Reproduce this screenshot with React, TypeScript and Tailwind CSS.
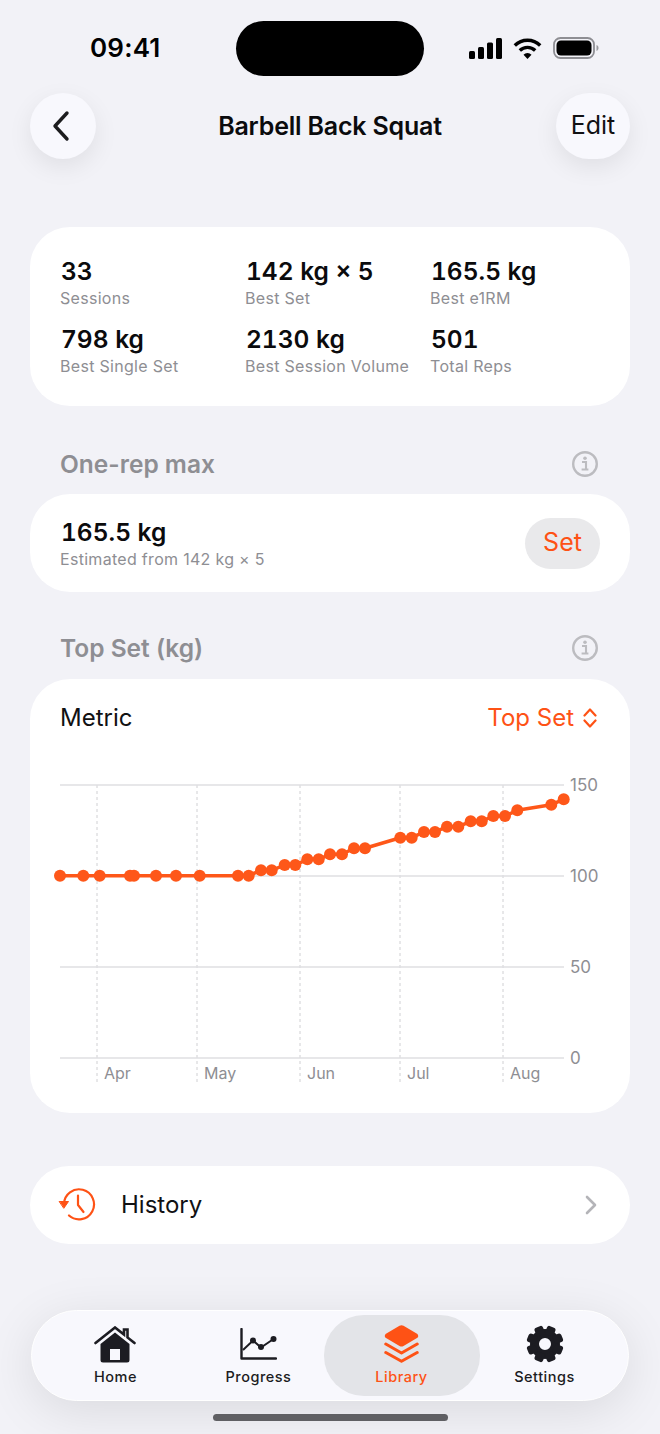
const font = { fontFamily: '"Inter", "Liberation Sans", sans-serif' };

const points: [number, number][] = [
  [60, 875.7], [83.3, 875.7], [99.7, 875.7], [130, 875.7], [134, 875.7], [156, 875.7], [176, 875.7], [199.7, 875.7],
  [238, 875.7], [248.7, 875.7], [261, 870.3], [271.7, 870.3], [284.7, 865], [295.3, 865], [307.3, 859.3], [318.7, 859.3],
  [330, 854.3], [342, 854.3], [354, 848.3], [365, 848.3], [400.3, 837.7], [411.7, 837.7], [424, 832], [435, 832],
  [447, 826.7], [458.3, 826.7], [470.7, 821.3], [481.7, 821.3], [493.3, 816], [505, 816], [517.3, 810.3], [551.3, 804.7], [563.7, 799.3],
];

const stats = [
  { value: "33", label: "Sessions" },
  { value: "142 kg × 5", label: "Best Set" },
  { value: "165.5 kg", label: "Best e1RM" },
  { value: "798 kg", label: "Best Single Set" },
  { value: "2130 kg", label: "Best Session Volume" },
  { value: "501", label: "Total Reps" },
];

function StatusBar() {
  return (
    <div className="h-[93px] relative flex items-start justify-between pl-[90px] pr-[61px] pt-[32px]">
      <span className="text-[26px] leading-[32px] font-semibold text-black tracking-[0.2px]">09:41</span>
      <div className="absolute left-[236px] top-[21px] w-[188px] h-[55px] rounded-full bg-black" />
      <div className="flex items-center gap-[11px] h-[32px]">
        <svg width="33" height="21" viewBox="0 0 33 21" fill="#000">
          <rect x="0" y="13" width="6" height="8" rx="1.5" />
          <rect x="9" y="9" width="6" height="12" rx="1.5" />
          <rect x="18" y="4.500" width="6" height="16.500" rx="1.500" />
          <rect x="27" y="0" width="6" height="21" rx="1.5" />
        </svg>
        <svg width="29" height="21" viewBox="0 0 29 21" fill="none" stroke="#000" strokeWidth="3.4">
          <path d="M1.800 7.500a18 18 0 0 1 25.400 0" />
          <path d="M6.800 12.500a11 11 0 0 1 15.400 0" />
          <path d="M14.500 21l-4-4.300a5.600 5.600 0 0 1 8 0z" fill="#000" stroke="none" />
        </svg>
        <svg width="46" height="22" viewBox="0 0 46 22" fill="none">
          <rect x="1" y="1" width="40" height="20" rx="6.500" stroke="#8e8e93" strokeWidth="1.8" />
          <rect x="3.500" y="3.500" width="35" height="15" rx="4.500" fill="#000" />
          <path d="M43.500 8c1.300.4 2 1.600 2 3s-.7 2.600-2 3z" fill="#9a9a9e" />
        </svg>
      </div>
    </div>
  );
}

function Header() {
  return (
    <div className="flex items-center justify-between px-[30px] h-[66px]">
      <button className="w-[66px] h-[66px] rounded-full bg-[#f8f8fd] shadow-[0_8px_24px_rgba(0,0,0,0.08)] flex items-center justify-center">
        <svg width="22" height="32" viewBox="0 0 22 32" fill="none" stroke="#1c1c1e" strokeWidth="3.4" strokeLinecap="round" strokeLinejoin="round" className="mr-[4px]">
          <path d="M17 3 L5 16 L17 29" />
        </svg>
      </button>
      <h1 className="ml-[8px] text-[25px] leading-[32px] font-semibold text-[#0b0b0d] tracking-[-0.2px]">Barbell Back Squat</h1>
      <button className="w-[74px] h-[66px] rounded-full bg-[#f8f8fd] shadow-[0_8px_24px_rgba(0,0,0,0.08)] text-[25px] text-[#111113]">Edit</button>
    </div>
  );
}

function StatsCard() {
  return (
    <div className="mt-[68px] mx-[30px] h-[179px] rounded-[40px] bg-white pl-[30px] pt-[27px] grid grid-cols-[185px_185px_1fr] grid-rows-[68px_68px]">
      {stats.map((s) => (
        <div key={s.label} className="flex flex-col">
          <span className="pl-[1px] text-[24.500px] leading-[34px] font-semibold tabular-nums text-[#0b0b0d]">{s.value}</span>
          <span className="text-[16px] leading-[21px] text-[#8e8e93] tracking-[0.3px]">{s.label}</span>
        </div>
      ))}
    </div>
  );
}

function InfoIcon() {
  return (
    <svg width="28" height="28" viewBox="0 0 28 28" fill="none">
      <circle cx="14" cy="14" r="11.800" stroke="#bcbcc0" strokeWidth="2.400" />
      <circle cx="14" cy="8.300" r="1.800" fill="#bcbcc0" />
      <path d="M11 12h4v7.500h2.200M10.600 19.500h6.800" stroke="#bcbcc0" strokeWidth="2.100" />
    </svg>
  );
}

function SectionTitle({ title }: { title: string }) {
  return (
    <div className="flex items-center justify-between h-[30px] pl-[60px] pr-[61px]">
      <span className="pb-[1px] text-[24.500px] leading-[30px] font-semibold text-[#8e8e93]">{title}</span>
      <InfoIcon />
    </div>
  );
}

function Chart() {
  const grid = [785, 876, 967, 1058];
  const ticks = [97, 197, 300, 400, 503];
  const yLabels = ["150", "100", "50", "0"];
  const xLabels = [
    { x: 104, t: "Apr" },
    { x: 204, t: "May" },
    { x: 307, t: "Jun" },
    { x: 407, t: "Jul" },
    { x: 510, t: "Aug" },
  ];
  return (
    <svg width="600" height="340" viewBox="30 760 600 340" className="block mt-[26px]" style={font}>
      {ticks.map((x) => (
        <line key={x} x1={x} x2={x} y1="785" y2="1082" stroke="#d0d0d3" strokeWidth="1" strokeDasharray="3 3" />
      ))}
      {grid.map((y) => (
        <line key={y} x1="60" x2="564" y1={y} y2={y} stroke="#dfdfe2" strokeWidth="1.500" />
      ))}
      <polyline points={points.map((p) => p.join(",")).join(" ")} fill="none" stroke="#fe5719" strokeWidth="3.500" strokeLinejoin="round" />
      {points.map((p, i) => (
        <circle key={i} cx={p[0]} cy={p[1]} r="6" fill="#fe5719" />
      ))}
      {yLabels.map((t, i) => (
        <text key={t} x="570" y={grid[i] + 6} fontSize="17" fill="#8e8e93">{t}</text>
      ))}
      {xLabels.map((l) => (
        <text key={l.t} x={l.x} y="1079" fontSize="16" fill="#8e8e93">{l.t}</text>
      ))}
    </svg>
  );
}

function HomeIcon() {
  return (
    <svg width="42" height="37" viewBox="0 0 42 37" fill="#1c1c22">
      <path d="M1.500 17 L21 1.500 L30 8.600 V3.500 H33.500 V11.400 L40.500 17" fill="none" stroke="#1c1c22" strokeWidth="2.600" strokeLinecap="round" />
      <path fillRule="evenodd" d="M21 6.500 L35.500 18 V34 a2.500 2.500 0 0 1-2.500 2.500 H9 A2.500 2.500 0 0 1 6.500 34 V18z M16 23 V34 H26 V23z" />
    </svg>
  );
}

function ProgressIcon() {
  return (
    <svg width="37" height="32" viewBox="0 0 37 32" fill="none" stroke="#1c1c22">
      <path d="M1.500 1 V30.500 H36" strokeWidth="2.400" strokeLinecap="round" strokeLinejoin="round" />
      <path d="M3 22 L13 12.500 L21 19.500 L33.500 11" strokeWidth="2" />
      <circle cx="13" cy="12.500" r="3" fill="#1c1c22" stroke="none" />
      <circle cx="21" cy="19" r="3" fill="#1c1c22" stroke="none" />
      <circle cx="33.500" cy="11" r="3" fill="#1c1c22" stroke="none" />
    </svg>
  );
}

function LayersIcon() {
  return (
    <svg width="35" height="38" viewBox="0 0 35 38" fill="#fe5215">
      <path d="M15.500 .8 a4 4 0 0 1 4 0 L33 8.800 a2.500 2.500 0 0 1 0 4.300 L19.500 21 a4 4 0 0 1-4 0 L2 13.100 a2.500 2.500 0 0 1 0-4.300z" />
      <path d="M1.800 19 L17.500 28 L33.200 19 M1.800 27.500 L17.500 36.300 L33.200 27.500" fill="none" stroke="#fe5215" strokeWidth="3" strokeLinecap="round" strokeLinejoin="round" />
    </svg>
  );
}

function GearIcon() {
  return (
    <svg width="38" height="38" viewBox="0 0 38 38" fill="none">
      <circle cx="19" cy="19" r="10.500" stroke="#1c1c22" strokeWidth="9" />
      {[0, 45, 90, 135, 180, 225, 270, 315].map((a) => (
        <rect key={a} x="14.500" y="0.500" width="9" height="9" rx="2.500" fill="#1c1c22" transform={`rotate(${a + 22.500} 19 19)`} />
      ))}
    </svg>
  );
}

function TabItem({ label, icon, active }: { label: string; icon: React.ReactNode; active?: boolean }) {
  return (
    <div className={active ? "w-[156px] h-[81px] rounded-[40px] bg-[#e3e4e8] flex flex-col items-center pt-[10px]" : "h-[81px] flex flex-col items-center pt-[10px]"}>
      <div className="h-[38px] flex items-center justify-center">{icon}</div>
      <span className={active ? "text-[14.500px] leading-[20px] mt-[4px] font-medium tracking-[0.5px] text-[#fe5215]" : "text-[14.500px] leading-[20px] mt-[4px] font-medium tracking-[0.5px] text-[#1c1c22]"}>{label}</span>
    </div>
  );
}

export default function App() {
  return (
    <div className="w-[660px] h-[1434px] bg-[#f2f2f7] overflow-hidden flex flex-col" style={font}>
      <StatusBar />
      <Header />
      <StatsCard />
      <div className="mt-[43px]"><SectionTitle title="One-rep max" /></div>
      <div className="mt-[15px] mx-[30px] h-[98px] rounded-[40px] bg-white flex items-center justify-between pl-[31px] pr-[30px]">
        <div className="flex flex-col">
          <span className="text-[24.500px] leading-[32px] font-semibold tabular-nums text-[#0b0b0d]">165.5 kg</span>
          <span className="-ml-[1px] text-[16px] leading-[22px] text-[#8e8e93] tracking-[0.3px]">Estimated from 142 kg × 5</span>
        </div>
        <button className="w-[75px] h-[51px] rounded-full bg-[#e9e9eb] text-[25px] text-[#fe5215]">Set</button>
      </div>
      <div className="mt-[41px]"><SectionTitle title="Top Set (kg)" /></div>
      <div className="mt-[16px] mx-[30px] h-[434px] rounded-[40px] bg-white">
        <div className="flex items-center justify-between h-[32px] pl-[30px] pr-[33px] pt-[23px] box-content">
          <span className="text-[24px] leading-[32px] text-[#111113]">Metric</span>
          <div className="flex items-center gap-[9px]">
            <span className="text-[24px] leading-[32px] text-[#fe5215]">Top Set</span>
            <svg width="14" height="20" viewBox="0 0 14 20" fill="none" stroke="#fe5215" strokeWidth="2.200" strokeLinecap="round" strokeLinejoin="round">
              <path d="M1.500 7.500 L7 1.500 L12.500 7.500 M1.500 12.500 L7 18.500 L12.500 12.500" />
            </svg>
          </div>
        </div>
        <Chart />
      </div>
      <div className="mt-[53px] mx-[30px] h-[78px] rounded-[40px] bg-white flex items-center pl-[28px] pr-[33px]">
        <svg width="38" height="36" viewBox="0 0 38 36" fill="none" stroke="#fe5215" strokeWidth="2.200" strokeLinecap="round" strokeLinejoin="round">
          <path d="M6 17 A15 15 0 1 1 11 28.500" />
          <path d="M1.500 14.500 H10.500 L6 21 Z" fill="#fe5215" strokeWidth="1" />
          <path d="M20 8.500 V18 L25.500 25" />
        </svg>
        <span className="ml-[25px] text-[24px] leading-[32px] text-[#111113]">History</span>
        <svg width="12" height="20" viewBox="0 0 12 20" fill="none" stroke="#b4b4b8" strokeWidth="2.600" strokeLinecap="round" strokeLinejoin="round" className="ml-auto">
          <path d="M2 2 L10 10 L2 18" />
        </svg>
      </div>
      <div className="mt-[66px] mx-[31px] h-[91px] rounded-[46px] border border-white bg-[#f8f8fd] shadow-[0_10px_50px_rgba(0,0,0,0.1)] grid grid-cols-[repeat(4,143px)] justify-items-center items-center pl-[12px]">
        <TabItem label="Home" icon={<HomeIcon />} />
        <TabItem label="Progress" icon={<ProgressIcon />} />
        <TabItem label="Library" icon={<LayersIcon />} active />
        <TabItem label="Settings" icon={<GearIcon />} />
      </div>
      <div className="mt-[13px] self-center w-[235px] h-[7px] rounded-full bg-[#5f5f63]" />
    </div>
  );
}
